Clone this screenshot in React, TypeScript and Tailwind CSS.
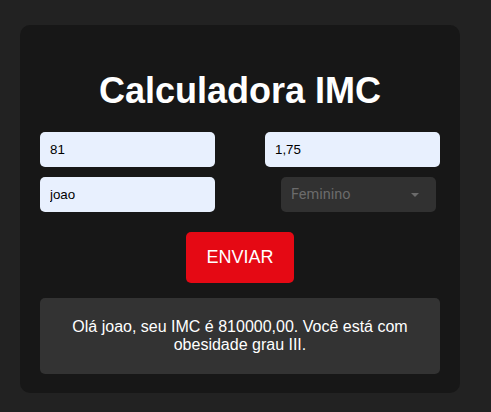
import { useState } from 'react';

const App = () => {
  const [peso, setPeso] = useState('81');
  const [altura, setAltura] = useState('1,75');
  const [nome, setNome] = useState('joao');

  return (
    <div className="min-h-screen w-full bg-[#222222] px-[20px] pt-[25px] font-['Liberation_Sans',Arial,sans-serif]">
      <div className="w-[440px] rounded-[10px] bg-[#171717] px-[20px] pt-[45px] pb-[19px]">
        {/* Title */}
        <h1 className="text-center text-[36px] leading-[41px] font-bold text-white">Calculadora IMC</h1>

        {/* Form */}
        <div className="mt-[21px] grid grid-cols-2 gap-x-[50px] gap-y-[10px]">
          <input
            value={peso}
            onChange={(e) => setPeso(e.target.value)}
            className="h-[35px] w-[175px] rounded-[5px] bg-[#e8f0fe] px-[10px] text-[13.33px] text-black outline-none"
          />
          <input
            value={altura}
            onChange={(e) => setAltura(e.target.value)}
            className="h-[35px] w-[175px] rounded-[5px] bg-[#e8f0fe] px-[10px] text-[13.33px] text-black outline-none"
          />
          <input
            value={nome}
            onChange={(e) => setNome(e.target.value)}
            className="h-[35px] w-[175px] rounded-[5px] bg-[#e8f0fe] px-[10px] text-[13.33px] text-black outline-none"
          />
          <div className="ml-[16px] flex h-[35px] w-[155px] items-center justify-between rounded-[5px] bg-[#313131] pl-[10px] pr-[17px] font-['Roboto',sans-serif] text-[14.5px] text-[#6b6b6b]">
            <span>Feminino</span>
            <svg width="8" height="4" viewBox="0 0 8 4">
              <path d="M0 0 L8 0 L4 4 Z" fill="#6b6b6b" />
            </svg>
          </div>
        </div>

        {/* Button */}
        <div className="mt-[20px] flex justify-center">
          <button className="h-[51px] w-[108px] rounded-[5px] bg-[#e50914] text-[18px] text-white">ENVIAR</button>
        </div>

        {/* Result */}
        <div className="mt-[15px] flex h-[76px] items-center justify-center rounded-[5px] bg-[#333333] px-[30px] text-center text-[16px] leading-[18px] text-white">
          Olá joao, seu IMC é 810000,00. Você está com obesidade grau III.
        </div>
      </div>
    </div>
  );
};

export default App;
